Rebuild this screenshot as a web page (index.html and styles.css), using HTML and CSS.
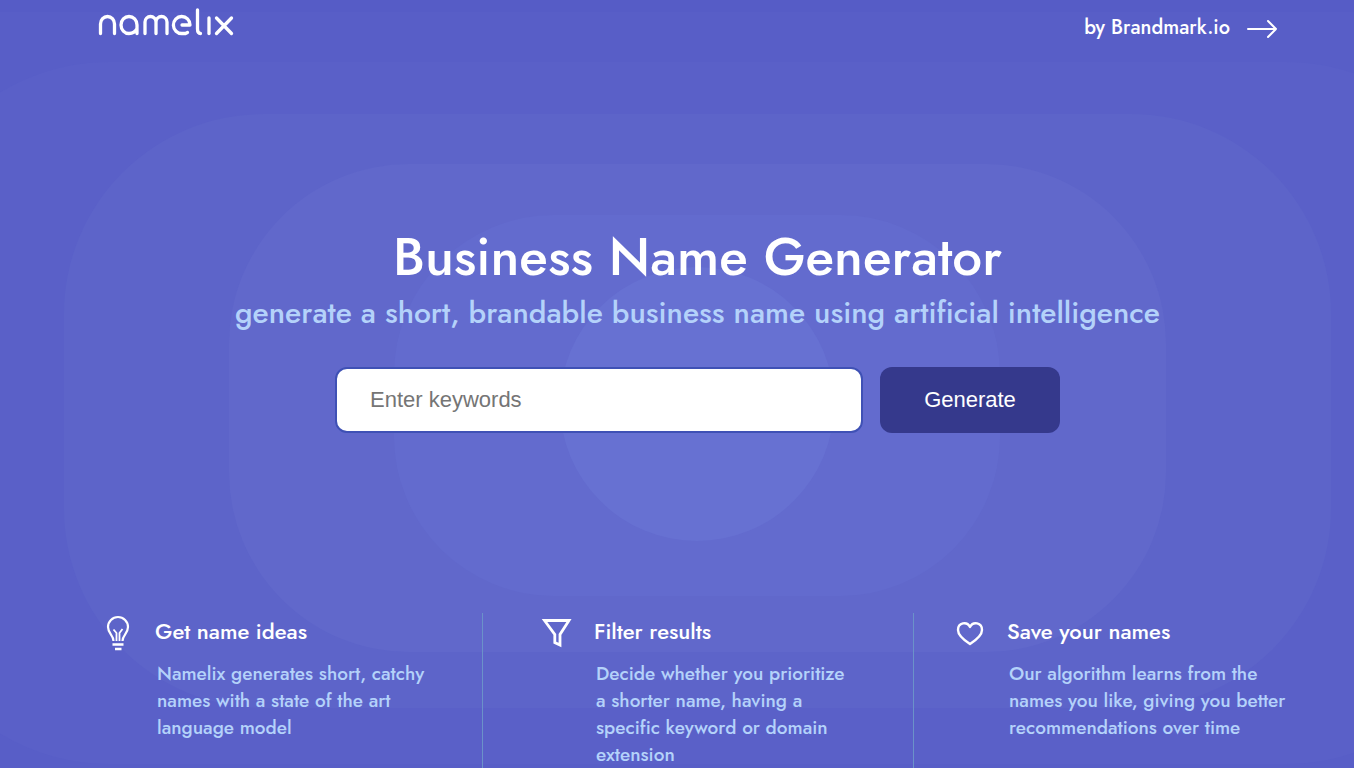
FILE: index.html
```html
<!DOCTYPE html>
<html lang="en">
<head>
<meta charset="utf-8">
<meta name="viewport" content="width=device-width, initial-scale=1">
<title>Namelix - Business Name Generator</title>
<link rel="stylesheet" href="styles.css">
</head>
<body class="page">
<svg class="backdrop" viewBox="0 0 1354 768" preserveAspectRatio="xMidYMid slice" aria-hidden="true">
  <rect x="-270" y="12" width="1935" height="804" rx="220" fill="#585ec7"/>
  <rect x="-101" y="62" width="1597" height="702" rx="210" fill="#5a60c8"/>
  <rect x="64" y="114" width="1267" height="594" rx="200" fill="#5d64c9"/>
  <rect x="229" y="164" width="937" height="488" rx="180" fill="#6168cb"/>
  <rect x="394" y="215" width="606" height="381" rx="160" fill="#636bce"/>
  <circle cx="697" cy="404" r="137" fill="#6771d2"/>
</svg>
<header class="topbar">
  <a class="logo" href="#" aria-label="namelix">
    <svg class="logo-mark" viewBox="0 0 136 28" width="136" height="28" fill="none" stroke="#fff" stroke-width="3.300" stroke-linecap="round" stroke-linejoin="round">
      <path d="M2.500 25.500V16A7 7.500 0 0 1 16.500 16V25.500"/>
      <path d="M39 25.500V17A8 8.500 0 1 0 31 25.500Q36.500 25.500 39 20.500"/>
      <path d="M47 25.500V14A5.500 5.500 0 0 1 58 14V25.500M58 14A5.500 5.500 0 0 1 69 14V25.500"/>
      <path d="M84 17H92A8.300 8.500 0 1 0 84 25.500H87.500L89.500 24.500"/>
      <path d="M99.500 2V21Q99.500 25.500 102.500 25.500"/>
      <path d="M111 10V25.500"/>
      <path d="M118.500 10L133.500 25.500M133.500 10L118.500 25.500"/>
    </svg>
  </a>
  <a class="brand-link" href="#">by Brandmark.io
    <svg class="arrow" viewBox="0 0 32 20" width="32" height="20" fill="none" stroke="#fff" stroke-width="2" stroke-linecap="round" stroke-linejoin="round" aria-hidden="true"><path d="M2 10H30M22 2L30 10L22 18"/></svg>
  </a>
</header>
<main>
  <section class="hero">
    <h1 class="hero-title">Business Name Generator</h1>
    <p class="hero-subtitle">generate a short, brandable business name using artificial intelligence</p>
    <form class="search">
      <input class="search-input" type="text" placeholder="Enter keywords" aria-label="Enter keywords">
      <button class="search-button" type="button">Generate</button>
    </form>
  </section>
  <section class="features">
    <article class="feature">
      <svg class="feature-icon" viewBox="0 0 40 40" width="40" height="40" fill="none" stroke="#fff" stroke-width="2.200" stroke-linejoin="round" aria-hidden="true">
        <path d="M15.500 28C15.500 22 10 20.500 10 14A10 10 0 0 1 30 14C30 20.500 24.500 22 24.500 28"/>
        <path d="M18.500 28V20L15.500 16.500M21.500 28V20L24.500 16" stroke-width="1.800"/>
        <path d="M14.500 31.500H25.500M17 36H23.500" stroke-width="2.400"/>
      </svg>
      <div class="feature-body">
        <h2 class="feature-title">Get name ideas</h2>
        <p class="feature-text">Namelix generates short, catchy names with a state of the art language model</p>
      </div>
    </article>
    <article class="feature">
      <svg class="feature-icon" viewBox="0 0 40 40" width="40" height="40" fill="none" stroke="#fff" stroke-width="2.800" aria-hidden="true"><path d="M7.500 7.500H32L23 21.500V32L17.800 29.500V21.500Z"/></svg>
      <div class="feature-body">
        <h2 class="feature-title">Filter results</h2>
        <p class="feature-text feature-text--narrow">Decide whether you prioritize a shorter name, having a specific keyword or domain extension</p>
      </div>
    </article>
    <article class="feature">
      <svg class="feature-icon" viewBox="0 0 40 40" width="40" height="40" fill="none" stroke="#fff" stroke-width="2.400" stroke-linejoin="round" aria-hidden="true"><path d="M20 31C13 26.500 8 22.500 8 17C8 9.500 17 8 20 14C23 8 32 9.500 32 17C32 22.500 27 26.500 20 31Z"/></svg>
      <div class="feature-body">
        <h2 class="feature-title">Save your names</h2>
        <p class="feature-text">Our algorithm learns from the names you like, giving you better recommendations over time</p>
      </div>
    </article>
  </section>
</main>
</body>
</html>
```
FILE: styles.css
```css
* {
  box-sizing: border-box;
}

.page {
  position: relative;
  display: flex;
  flex-direction: column;
  min-height: 100vh;
  margin: 0;
  overflow-x: hidden;
  background: #565cc6;
  color: #fff;
  font-family: Jost, Lato, sans-serif;
  font-weight: 500;
}

.page main {
  display: flex;
  flex: 1;
  flex-direction: column;
}

.backdrop {
  position: absolute;
  inset: 0;
  z-index: -1;
  width: 100%;
  height: 100%;
}

.topbar {
  display: flex;
  align-items: flex-start;
  justify-content: space-between;
  padding: 8px 76px 0 98px;
}

.logo-mark {
  display: block;
}

.brand-link {
  display: flex;
  align-items: center;
  gap: 16px;
  padding-top: 8px;
  color: #fff;
  font-size: 20px;
  line-height: 24px;
  text-decoration: none;
}

.arrow {
  margin-top: 2px;
}

.hero {
  display: flex;
  flex-direction: column;
  align-items: center;
  padding: 181px 0 0 41px;
  text-align: center;
}

.hero-title {
  margin: 0;
  font-size: 53px;
  font-weight: 500;
  line-height: 72px;
}

.hero-subtitle {
  margin: 0;
  color: #b4d2fa;
  font-size: 30px;
  line-height: 40px;
}

.search {
  display: flex;
  gap: 17px;
  width: 100%;
  max-width: 725px;
  margin-top: 34px;
}

.search-input,
.search-button {
  height: 66px;
  border-radius: 12px;
  font-family: "Liberation Sans", Arial, sans-serif;
  font-size: 22px;
}

.search-input {
  flex: 1;
  min-width: 0;
  padding: 0 33px;
  border: 2px solid #3f51b5;
  background: #fff;
  color: #333;
}

.search-input::placeholder {
  color: #757575;
}

.search-button {
  width: 180px;
  border: 0;
  background: #35398c;
  color: #fff;
}

.features {
  display: grid;
  flex: 1;
  grid-template-columns: 385fr 431fr 385fr;
  margin-top: 180px;
  padding: 0 55px 0 98px;
}

.feature {
  display: flex;
  align-items: flex-start;
  gap: 17px;
  border-right: 1px solid #6b92c9;
}

.feature:nth-child(2) {
  padding-left: 54px;
}

.feature:nth-child(3) {
  padding-left: 36px;
  border-right: 0;
}

.feature-icon {
  flex: none;
}

.feature-title {
  margin: 3px 0 14px;
  font-size: 22px;
  font-weight: 500;
  line-height: 30px;
}

.feature-text {
  max-width: 282px;
  margin: 0;
  padding-left: 2px;
  color: #b4d2fa;
  font-size: 19px;
  line-height: 27px;
}

.feature-text--narrow {
  max-width: 256px;
}
```
